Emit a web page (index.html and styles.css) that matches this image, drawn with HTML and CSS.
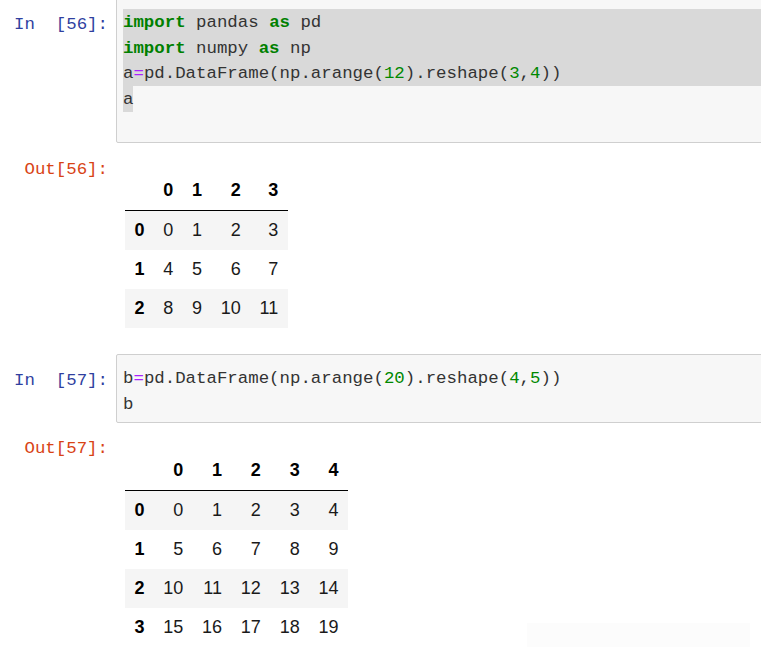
FILE: index.html
```html
<!DOCTYPE html>
<html>
<head>
<meta charset="utf-8">
<title>Notebook</title>
<link rel="stylesheet" href="styles.css">
</head>
<body>
<div class="notebook">
  <div class="cell">
    <div class="row">
      <div class="prompt in-prompt">In&nbsp;&nbsp;[56]:</div>
      <div class="input-area">
        <div class="line sel"><span class="kw">import</span> pandas <span class="kw">as</span> pd</div>
        <div class="line sel"><span class="kw">import</span> numpy <span class="kw">as</span> np</div>
        <div class="line sel">a<span class="op">=</span>pd.DataFrame(np.arange(<span class="num">12</span>).reshape(<span class="num">3</span>,<span class="num">4</span>))</div>
        <div class="line"><span class="sel sel-char">a</span></div>
        <div class="line">&nbsp;</div>
      </div>
    </div>
    <div class="row">
      <div class="prompt out-prompt">Out[56]:</div>
      <div class="output-area">
        <table class="dataframe">
          <thead>
            <tr><th></th><th>0</th><th>1</th><th>2</th><th>3</th></tr>
          </thead>
          <tbody>
            <tr><th>0</th><td>0</td><td>1</td><td>2</td><td>3</td></tr>
            <tr><th>1</th><td>4</td><td>5</td><td>6</td><td>7</td></tr>
            <tr><th>2</th><td>8</td><td>9</td><td>10</td><td>11</td></tr>
          </tbody>
        </table>
      </div>
    </div>
  </div>

  <div class="cell cell-next">
    <div class="row">
      <div class="prompt in-prompt">In&nbsp;&nbsp;[57]:</div>
      <div class="input-area">
        <div class="line">b<span class="op">=</span>pd.DataFrame(np.arange(<span class="num">20</span>).reshape(<span class="num">4</span>,<span class="num">5</span>))</div>
        <div class="line">b</div>
      </div>
    </div>
    <div class="row">
      <div class="prompt out-prompt">Out[57]:</div>
      <div class="output-area">
        <table class="dataframe">
          <thead>
            <tr><th></th><th>0</th><th>1</th><th>2</th><th>3</th><th>4</th></tr>
          </thead>
          <tbody>
            <tr><th>0</th><td>0</td><td>1</td><td>2</td><td>3</td><td>4</td></tr>
            <tr><th>1</th><td>5</td><td>6</td><td>7</td><td>8</td><td>9</td></tr>
            <tr><th>2</th><td>10</td><td>11</td><td>12</td><td>13</td><td>14</td></tr>
            <tr><th>3</th><td>15</td><td>16</td><td>17</td><td>18</td><td>19</td></tr>
          </tbody>
        </table>
      </div>
    </div>
  </div>
</div>
<div class="ghost"></div>
</body>
</html>
```

FILE: styles.css
```css
html, body {
  margin: 0;
  padding: 0;
  background: #ffffff;
  overflow: hidden;
}

.notebook {
  width: 800px;
  margin-top: -2px;
}

.cell-next {
  margin-top: 26px;
}

.row {
  display: grid;
  grid-template-columns: 108px 1fr;
  column-gap: 8px;
  align-items: start;
}

.prompt {
  font-family: "Liberation Mono", "DejaVu Sans Mono", monospace;
  font-size: 17.4px;
  line-height: 25.5px;
  text-align: right;
  white-space: pre;
}

.in-prompt {
  color: #303f9f;
  padding-top: 13.5px;
}

.out-prompt {
  color: #d84315;
  padding-top: 13.5px;
}

.input-area {
  background: #f7f7f7;
  border: 1px solid #cfcfcf;
  border-radius: 2px;
  padding: 10px 0 5.5px 6px;
  font-family: "Liberation Mono", "DejaVu Sans Mono", monospace;
  font-size: 17.4px;
  color: #333333;
}

.line {
  height: 23.5px;
  padding-top: 2px;
  line-height: 23.5px;
  white-space: pre;
}

.sel {
  background: #d9d9d9;
}

.sel-char {
  display: inline-block;
  vertical-align: top;
  margin-top: -2px;
  padding-top: 2px;
  height: 24px;
}

.kw {
  color: #008000;
  font-weight: bold;
}

.num {
  color: #008800;
}

.op {
  color: #aa22ff;
}

.output-area {
  padding-left: 9px;
  padding-top: 28px;
}

.dataframe {
  border-collapse: collapse;
  border: none;
  font-family: "Liberation Sans", Arial, sans-serif;
  font-size: 18px;
  color: #000000;
}

.dataframe th,
.dataframe td {
  padding: 9px 9.4px;
  line-height: 21px;
  height: 21px;
  text-align: right;
  vertical-align: middle;
  border: none;
}

.dataframe th {
  font-weight: bold;
}

.dataframe td {
  font-weight: normal;
  color: #1a1a1a;
}

.dataframe thead {
  border-bottom: 1px solid #000000;
}

.dataframe tbody tr:nth-child(odd) {
  background: #f5f5f5;
}

.ghost {
  position: absolute;
  left: 527px;
  top: 623px;
  width: 223px;
  height: 24px;
  background: #fcfcfc;
}
```
